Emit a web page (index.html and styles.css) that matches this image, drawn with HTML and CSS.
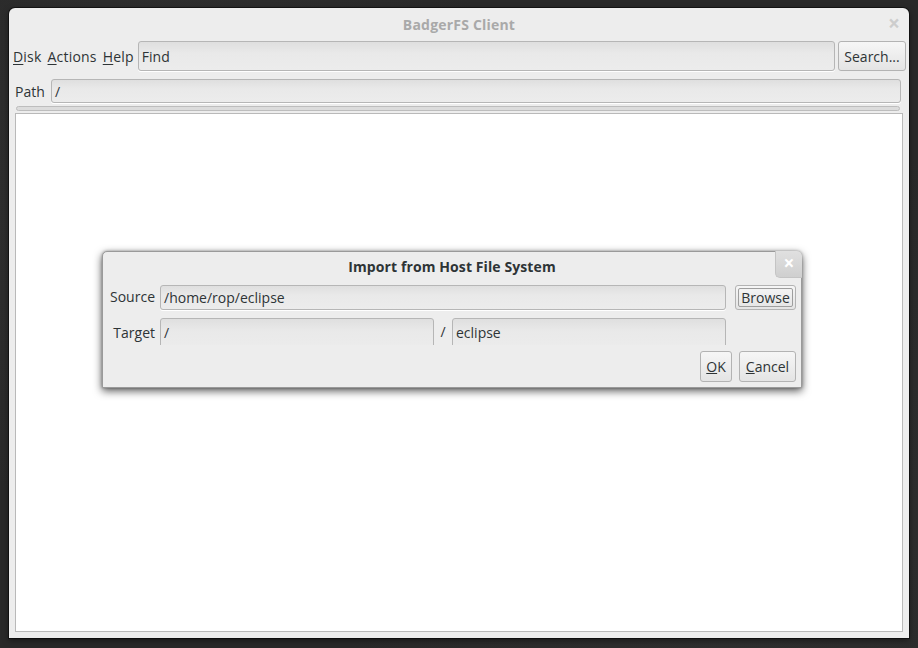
FILE: index.html
```html
<!DOCTYPE html>
<html>
<head>
<meta charset="utf-8">
<link rel="stylesheet" href="styles.css">
</head>
<body>
<div class="desk">
  <div class="win">
    <div class="titlebar">
      <span class="title">BadgerFS Client</span>
      <span class="wclose">&times;</span>
    </div>
    <div class="toolbar">
      <nav class="menu">
        <span class="mi"><u>D</u>isk</span>
        <span class="mi"><u>A</u>ctions</span>
        <span class="mi"><u>H</u>elp</span>
      </nav>
      <div class="entry find">Find</div>
      <div class="btn search">Search...</div>
    </div>
    <div class="pathrow">
      <span class="lbl">Path</span>
      <div class="entry path">/</div>
    </div>
    <div class="hscroll"></div>
    <div class="panel"></div>
  </div>

  <div class="dialog">
    <div class="dtitle">
      <span class="dtext">Import from Host File System</span>
      <span class="dclose">&times;</span>
    </div>
    <div class="drow first">
      <span class="dlbl">Source</span>
      <div class="entry src">/home/rop/eclipse</div>
      <div class="btn browse"><span class="focus">Browse</span></div>
    </div>
    <div class="drow clip">
      <span class="dlbl">Target</span>
      <div class="entry tgt">/</div>
      <span class="sep">/</span>
      <div class="entry tgt">eclipse</div>
    </div>
    <div class="dbtns">
      <div class="btn ok"><u>O</u>K</div>
      <div class="btn cancel"><u>C</u>ancel</div>
    </div>
  </div>
</div>
</body>
</html>
```
FILE: styles.css
```css
* { box-sizing: border-box; }
html, body { margin: 0; padding: 0; }
body {
  width: 918px;
  height: 648px;
  overflow: hidden;
  background: #2b2b2b;
  font-family: "Open Sans", "DejaVu Sans", sans-serif;
  font-size: 14px;
  color: #2e3436;
}
.desk {
  position: relative;
  width: 918px;
  height: 648px;
  padding: 8px 0 0 9px;
  background:
    radial-gradient(circle at 20% 30%, #333 0, transparent 40%),
    radial-gradient(circle at 80% 80%, #303030 0, transparent 45%),
    #292929;
}
.win {
  width: 900px;
  height: 630px;
  background: #ededed;
  border-radius: 6px 6px 0 0;
  box-shadow: 0 0 0 1px rgba(0,0,0,0.5), 0 2px 6px rgba(0,0,0,0.5);
  display: flex;
  flex-direction: column;
}
.titlebar {
  height: 33px;
  display: flex;
  align-items: center;
  justify-content: center;
  position: relative;
}
.title {
  font-weight: bold;
  color: #a9a9a9;
  font-size: 14px;
  letter-spacing: 0.2px;
}
.wclose {
  position: absolute;
  right: 9px;
  top: 5px;
  color: #cdcdcd;
  font-size: 21px;
  font-weight: bold;
  line-height: 20px;
}
.toolbar {
  display: flex;
  align-items: center;
  height: 30px;
  padding: 0 3px 0 4px;
}
.menu {
  display: flex;
  gap: 6px;
  margin-right: 4px;
  letter-spacing: 0.2px;
}
.mi { color: #2e3436; }
.mi u { text-decoration-thickness: 1px; text-underline-offset: 2px; }
.entry {
  border: 1px solid #b6b6b6;
  border-radius: 3px;
  background: linear-gradient(#dfdfdf, #e9e9e9 40%, #ececec);
  box-shadow: 0 1px 0 #fff;
  display: flex;
  align-items: center;
  padding-left: 3px;
  color: #2e3436;
  white-space: nowrap;
  overflow: hidden;
}
.find { flex: 1; height: 30px; }
.btn {
  border: 1px solid #b3b3b3;
  border-radius: 3px;
  background: linear-gradient(#f6f6f6, #e4e4e4);
  display: flex;
  align-items: center;
  justify-content: center;
  color: #2e3436;
}
.search { width: 68px; height: 30px; margin-left: 3px; }
.pathrow {
  display: flex;
  align-items: center;
  height: 24px;
  margin-top: 8px;
  padding: 0 8px 0 6px;
}
.lbl { width: 36px; }
.path { flex: 1; height: 24px; }
.hscroll {
  height: 5px;
  margin: 3px 9px 0 7px;
  border: 1px solid #bdbdbd;
  border-radius: 3px;
  background: #dcdcdc;
}
.panel {
  flex: 1;
  margin: 2px 6px 6px 6px;
  background: #fff;
  border: 1px solid #b9b9b9;
}
.dialog {
  position: absolute;
  left: 102px;
  top: 251px;
  width: 700px;
  height: 137px;
  background: #ededed;
  border: 1px solid #9a9a9a;
  border-radius: 5px 5px 0 0;
  box-shadow: 0 3px 8px rgba(0,0,0,0.65), 0 0 3px rgba(0,0,0,0.3);
  padding: 0 5px 0 5px;
}
.dtitle {
  height: 27px;
  display: flex;
  align-items: center;
  justify-content: center;
  position: relative;
}
.dtext { font-weight: bold; color: #2e3436; margin-top: 1px; letter-spacing: 0.1px; }
.dclose {
  position: absolute;
  right: -6px;
  top: -1px;
  width: 27px;
  height: 27px;
  border-left: 1px solid #c4c4c4;
  border-bottom: 1px solid #c4c4c4;
  border-radius: 0 5px 0 5px;
  background: linear-gradient(#e0e0e0, #cfcfcf);
  color: #fff;
  font-size: 19px;
  font-weight: bold;
  line-height: 1;
  display: flex;
  align-items: center;
  justify-content: center;
  padding-bottom: 2px;
}
.drow {
  display: flex;
  align-items: center;
  height: 25px;
  margin-top: 6px;
}
.drow.clip { height: 27px; margin-top: 8px; overflow: hidden; align-items: flex-start; }
.dlbl { width: 47px; text-align: right; margin-right: 5px; }
.drow.first .dlbl { margin-top: -2px; }
.drow.clip .dlbl { margin-top: 5px; }
.src { width: 566px; height: 25px; }
.browse { width: 61px; height: 25px; margin-left: 9px; padding: 2px; }
.focus {
  border: 1px solid #9e9e9e;
  border-radius: 2px;
  width: 100%;
  height: 100%;
  display: flex;
  align-items: center;
  justify-content: center;
}
.tgt { width: 274px; height: 32px; align-items: flex-start; padding-top: 4px; }
.sep { width: 18px; text-align: center; margin-top: 4px; }
.dbtns {
  display: flex;
  justify-content: flex-end;
  gap: 7px;
  margin-top: 6px;
  padding-right: 0;
}
.ok { width: 32px; height: 31px; }
.cancel { width: 57px; height: 31px; }
```
